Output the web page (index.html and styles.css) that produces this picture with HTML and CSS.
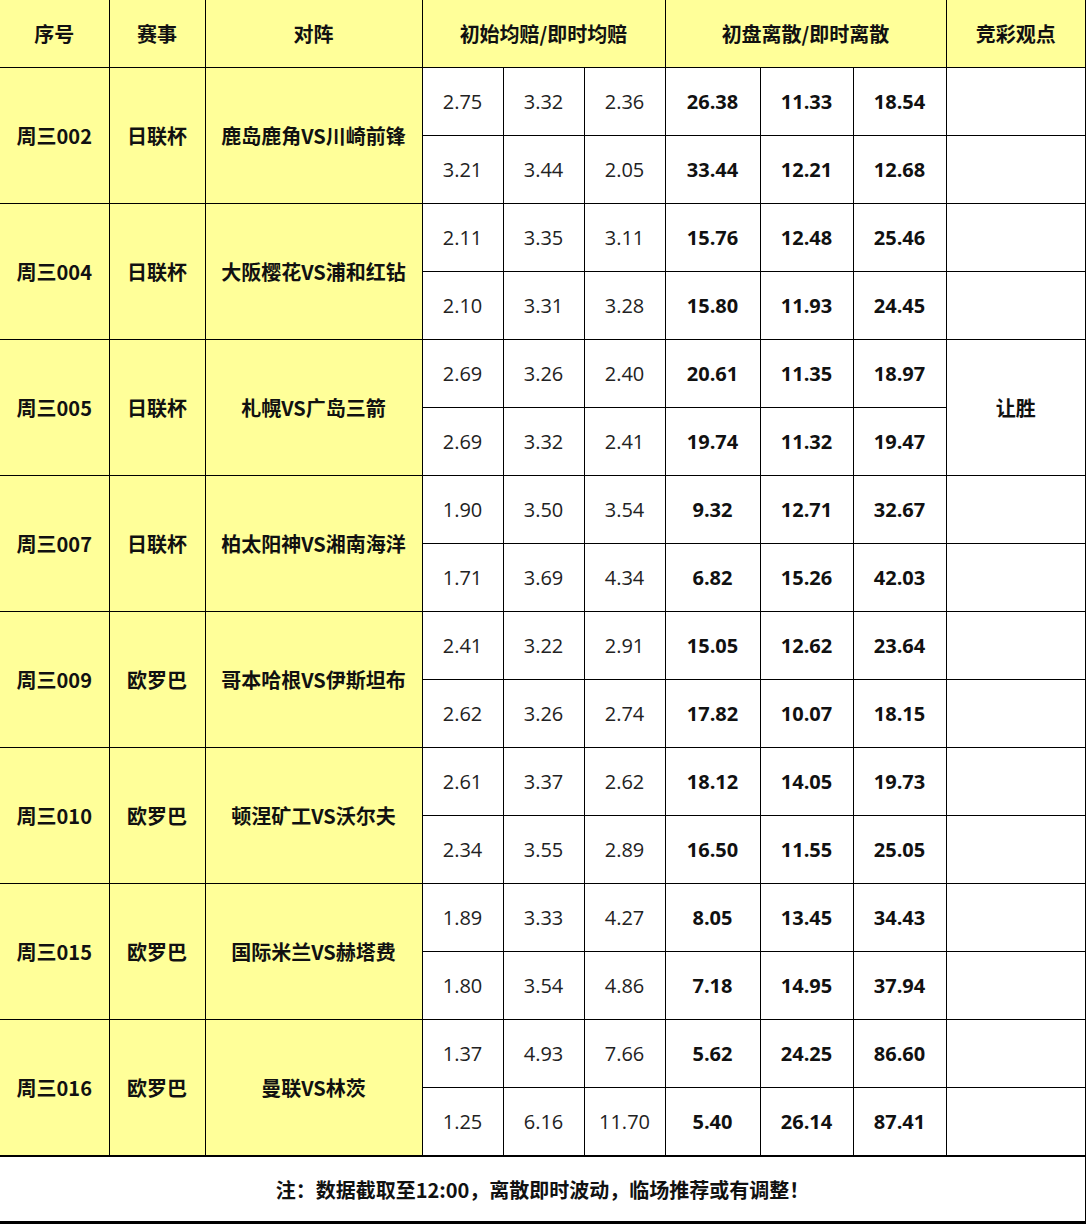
FILE: index.html
```html
<!DOCTYPE html>
<html lang="zh-CN">
<head>
<meta charset="utf-8">
<title>赔率离散</title>
<link rel="stylesheet" href="styles.css">
</head>
<body>
<table class="odds">
  <colgroup>
    <col class="c-no"><col class="c-lg"><col class="c-match">
    <col class="c-o"><col class="c-o"><col class="c-o">
    <col class="c-d1"><col class="c-d2"><col class="c-d3">
    <col class="c-view">
  </colgroup>
  <thead>
    <tr class="head">
      <th>序号</th><th>赛事</th><th>对阵</th>
      <th colspan="3">初始均赔/即时均赔</th>
      <th colspan="3">初盘离散/即时离散</th>
      <th class="last">竞彩观点</th>
    </tr>
  </thead>
  <tbody>
    <tr><td rowspan="2" class="y">周三002</td><td rowspan="2" class="y">日联杯</td><td rowspan="2" class="y">鹿岛鹿角VS川崎前锋</td>
      <td class="n">2.75</td><td class="n">3.32</td><td class="n">2.36</td><td class="b">26.38</td><td class="b">11.33</td><td class="b">18.54</td><td class="last"></td></tr>
    <tr><td class="n">3.21</td><td class="n">3.44</td><td class="n">2.05</td><td class="b">33.44</td><td class="b">12.21</td><td class="b">12.68</td><td class="last"></td></tr>

    <tr><td rowspan="2" class="y">周三004</td><td rowspan="2" class="y">日联杯</td><td rowspan="2" class="y">大阪樱花VS浦和红钻</td>
      <td class="n">2.11</td><td class="n">3.35</td><td class="n">3.11</td><td class="b">15.76</td><td class="b">12.48</td><td class="b">25.46</td><td class="last"></td></tr>
    <tr><td class="n">2.10</td><td class="n">3.31</td><td class="n">3.28</td><td class="b">15.80</td><td class="b">11.93</td><td class="b">24.45</td><td class="last"></td></tr>

    <tr><td rowspan="2" class="y">周三005</td><td rowspan="2" class="y">日联杯</td><td rowspan="2" class="y">札幌VS广岛三箭</td>
      <td class="n">2.69</td><td class="n">3.26</td><td class="n">2.40</td><td class="b">20.61</td><td class="b">11.35</td><td class="b">18.97</td><td rowspan="2" class="last view">让胜</td></tr>
    <tr><td class="n">2.69</td><td class="n">3.32</td><td class="n">2.41</td><td class="b">19.74</td><td class="b">11.32</td><td class="b">19.47</td></tr>

    <tr><td rowspan="2" class="y">周三007</td><td rowspan="2" class="y">日联杯</td><td rowspan="2" class="y">柏太阳神VS湘南海洋</td>
      <td class="n">1.90</td><td class="n">3.50</td><td class="n">3.54</td><td class="b">9.32</td><td class="b">12.71</td><td class="b">32.67</td><td class="last"></td></tr>
    <tr><td class="n">1.71</td><td class="n">3.69</td><td class="n">4.34</td><td class="b">6.82</td><td class="b">15.26</td><td class="b">42.03</td><td class="last"></td></tr>

    <tr><td rowspan="2" class="y">周三009</td><td rowspan="2" class="y">欧罗巴</td><td rowspan="2" class="y">哥本哈根VS伊斯坦布</td>
      <td class="n">2.41</td><td class="n">3.22</td><td class="n">2.91</td><td class="b">15.05</td><td class="b">12.62</td><td class="b">23.64</td><td class="last"></td></tr>
    <tr><td class="n">2.62</td><td class="n">3.26</td><td class="n">2.74</td><td class="b">17.82</td><td class="b">10.07</td><td class="b">18.15</td><td class="last"></td></tr>

    <tr><td rowspan="2" class="y">周三010</td><td rowspan="2" class="y">欧罗巴</td><td rowspan="2" class="y">顿涅矿工VS沃尔夫</td>
      <td class="n">2.61</td><td class="n">3.37</td><td class="n">2.62</td><td class="b">18.12</td><td class="b">14.05</td><td class="b">19.73</td><td class="last"></td></tr>
    <tr><td class="n">2.34</td><td class="n">3.55</td><td class="n">2.89</td><td class="b">16.50</td><td class="b">11.55</td><td class="b">25.05</td><td class="last"></td></tr>

    <tr><td rowspan="2" class="y">周三015</td><td rowspan="2" class="y">欧罗巴</td><td rowspan="2" class="y">国际米兰VS赫塔费</td>
      <td class="n">1.89</td><td class="n">3.33</td><td class="n">4.27</td><td class="b">8.05</td><td class="b">13.45</td><td class="b">34.43</td><td class="last"></td></tr>
    <tr><td class="n">1.80</td><td class="n">3.54</td><td class="n">4.86</td><td class="b">7.18</td><td class="b">14.95</td><td class="b">37.94</td><td class="last"></td></tr>

    <tr><td rowspan="2" class="y">周三016</td><td rowspan="2" class="y">欧罗巴</td><td rowspan="2" class="y">曼联VS林茨</td>
      <td class="n">1.37</td><td class="n">4.93</td><td class="n">7.66</td><td class="b">5.62</td><td class="b">24.25</td><td class="b">86.60</td><td class="last"></td></tr>
    <tr><td class="n">1.25</td><td class="n">6.16</td><td class="n">11.70</td><td class="b">5.40</td><td class="b">26.14</td><td class="b">87.41</td><td class="last"></td></tr>
  </tbody>
  <tfoot>
    <tr class="foot"><td colspan="10" class="last">注：数据截取至12:00，离散即时波动，临场推荐或有调整！</td></tr>
  </tfoot>
</table>
</body>
</html>
```

FILE: styles.css
```css
html, body {
  margin: 0;
  padding: 0;
  background: #ffffff;
}

.odds {
  width: 1086px;
  border-collapse: collapse;
  table-layout: fixed;
  font-family: "Noto Sans CJK SC", "Noto Sans", sans-serif;
  color: #111;
}

.c-no { width: 109px; }
.c-lg { width: 96px; }
.c-match { width: 217px; }
.c-o { width: 81px; }
.c-d1 { width: 95px; }
.c-d2 { width: 93px; }
.c-d3 { width: 93px; }
.c-view { width: 140px; }

.odds th,
.odds td {
  border: 1px solid #000;
  padding: 0;
  text-align: center;
  vertical-align: middle;
  height: 67px;
  white-space: nowrap;
}

.odds tr > :first-child { border-left: none; }
.odds .last { border-right: 2px solid #000; }

.head th {
  background: #ffff99;
  border-top: none;
  font-weight: 700;
  font-size: 20px;
}

.y {
  background: #ffff99;
  font-weight: 700;
  font-size: 20px;
}

.n {
  font-family: "Open Sans", "Noto Sans", sans-serif;
  font-size: 20px;
  font-weight: 400;
  color: #222;
}

.b {
  font-family: "Open Sans", "Noto Sans", sans-serif;
  font-size: 20px;
  font-weight: 700;
}

.view {
  font-weight: 700;
  font-size: 20px;
}

.foot td {
  border-top: 2px solid #000;
  border-bottom: 3px solid #000;
  height: 64px;
  font-weight: 700;
  font-size: 20px;
}
```
